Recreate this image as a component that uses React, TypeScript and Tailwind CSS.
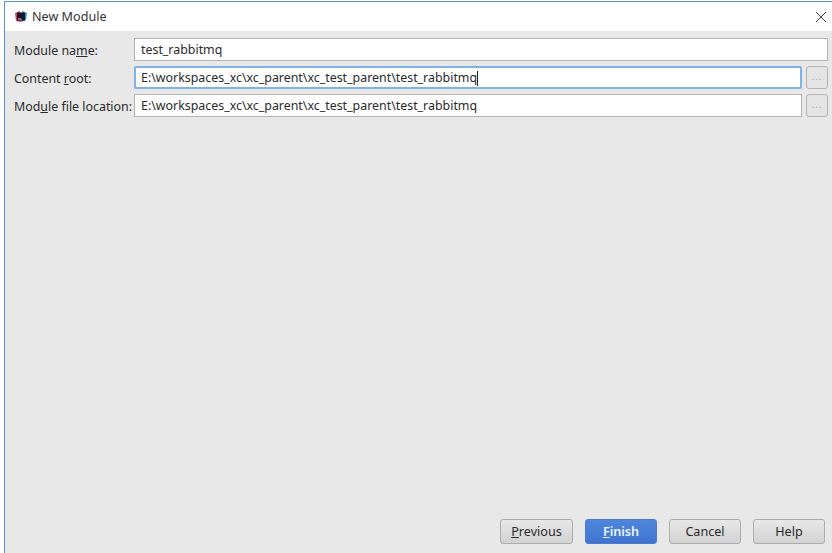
const font = { fontFamily: "'Noto Sans', 'Open Sans', sans-serif" };

function Label({ before, u, after }: { before: string; u: string; after: string }) {
  return (
    <label className="w-[120px] shrink-0 whitespace-nowrap pt-[4px] text-[12.4px] text-[#2b2b2b]">
      {before}
      <span className="underline">{u}</span>
      {after}
    </label>
  );
}

function Field({ value, focused }: { value: string; focused?: boolean }) {
  return (
    <div
      className={
        focused
          ? "flex h-[23px] flex-1 items-center border-2 border-[#7fb2e5] rounded-[2px] bg-white pl-[5px] pt-[2px] text-[12.4px] text-[#2b2b2b]"
          : "flex h-[23px] flex-1 items-center border border-[#b4b4b4] bg-white pl-[6px] pt-[2px] text-[12.4px] text-[#2b2b2b]"
      }
    >
      <span>{value}</span>
      {focused && <span className="h-[15px] w-px bg-[#222]" />}
    </div>
  );
}

function Browse() {
  return (
    <div className="ml-[4px] flex h-[23px] w-[22px] shrink-0 items-center justify-center rounded-[3px] border border-[#b4b4b4] bg-[#e4e4e4] pb-[1px] text-[9px] tracking-[1px] text-[#999]">
      ...
    </div>
  );
}

function Btn({ children, primary, wide }: { children: React.ReactNode; primary?: boolean; wide?: boolean }) {
  return (
    <div
      className={
        primary
          ? "flex h-[25px] w-[72px] items-center justify-center rounded-[3px] border border-[#4a7ccb] bg-gradient-to-b from-[#4f86dc] to-[#3f75cf] pt-[2px] text-[12.6px] font-semibold text-[#eef3fb]"
          : wide
            ? "flex h-[25px] w-[73px] items-center justify-center rounded-[3px] border border-[#acacac] bg-gradient-to-b from-[#e8e8e8] to-[#d2d2d2] pt-[2px] text-[12.6px] text-[#2b2b2b]"
            : "flex h-[25px] w-[72px] items-center justify-center rounded-[3px] border border-[#acacac] bg-gradient-to-b from-[#e8e8e8] to-[#d2d2d2] pt-[2px] text-[12.6px] text-[#2b2b2b]"
      }
    >
      {children}
    </div>
  );
}

export default function App() {
  return (
    <div className="flex h-[553px] w-[832px] overflow-hidden bg-white pl-[4px] pt-px" style={font}>
      <div className="flex flex-1 flex-col border-l border-t border-[#5f93c8]">
        {/* Title bar */}
        <div className="flex h-[29px] shrink-0 items-center bg-white pl-[9px] pr-[4px]">
          <svg width="14" height="13" viewBox="0 0 14 13" className="shrink-0">
            <path d="M1 3 L6 1 L7 12 L2 11 Z" fill="#e2366f" />
            <path d="M8 1 L13 3 L12 10 L7 12 Z" fill="#2f8fe8" />
            <rect x="3" y="2.5" width="8" height="8" fill="#16161e" />
            <rect x="4" y="8.5" width="3.5" height="1" fill="#ddd" />
          </svg>
          <span className="ml-[4px] pt-[2px] text-[12.6px] text-[#333]">New Module</span>
          <svg width="12" height="12" viewBox="0 0 12 12" className="ml-auto mr-[1px]">
            <path d="M1 1 L11 11 M11 1 L1 11" stroke="#444" strokeWidth="1" fill="none" />
          </svg>
        </div>

        {/* Form */}
        <div className="flex flex-1 flex-col bg-[#e8e8e8] pl-[9px] pr-[4px]">
          <div className="flex flex-col gap-[5px] pt-[7px]">
            <div className="flex items-center">
              <Label before="Module na" u="m" after="e:" />
              <Field value="test_rabbitmq" />
            </div>
            <div className="flex items-center">
              <Label before="Content " u="r" after="oot:" />
              <Field value="E:\workspaces_xc\xc_parent\xc_test_parent\test_rabbitmq" focused />
              <Browse />
            </div>
            <div className="flex items-center">
              <Label before="Mod" u="u" after="le file location:" />
              <Field value="E:\workspaces_xc\xc_parent\xc_test_parent\test_rabbitmq" />
              <Browse />
            </div>
          </div>

          {/* Footer buttons */}
          <div className="mt-auto flex justify-end gap-[12px] pb-[9px] pr-[3px]">
            <Btn wide>
              <span className="underline">P</span>revious
            </Btn>
            <Btn primary>
              <span className="underline">F</span>inish
            </Btn>
            <Btn>Cancel</Btn>
            <Btn>Help</Btn>
          </div>
        </div>
      </div>
    </div>
  );
}
